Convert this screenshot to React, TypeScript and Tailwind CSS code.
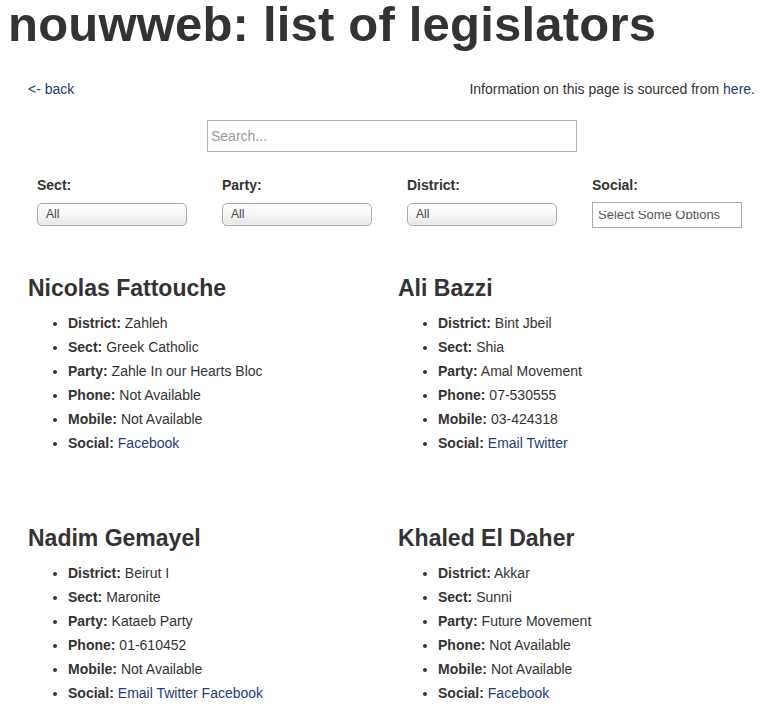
const legislators = [
  {
    name: "Nicolas Fattouche",
    district: "Zahleh",
    sect: "Greek Catholic",
    party: "Zahle In our Hearts Bloc",
    phone: "Not Available",
    mobile: "Not Available",
    social: ["Facebook"],
  },
  {
    name: "Ali Bazzi",
    district: "Bint Jbeil",
    sect: "Shia",
    party: "Amal Movement",
    phone: "07-530555",
    mobile: "03-424318",
    social: ["Email", "Twitter"],
  },
  {
    name: "Nadim Gemayel",
    district: "Beirut I",
    sect: "Maronite",
    party: "Kataeb Party",
    phone: "01-610452",
    mobile: "Not Available",
    social: ["Email", "Twitter", "Facebook"],
  },
  {
    name: "Khaled El Daher",
    district: "Akkar",
    sect: "Sunni",
    party: "Future Movement",
    phone: "Not Available",
    mobile: "Not Available",
    social: ["Facebook"],
  },
];

const filters = ["Sect:", "Party:", "District:"];

function Field({ label, value }: { label: string; value: React.ReactNode }) {
  return (
    <li className="leading-[24px]">
      <span className="font-bold">{label}</span> {value}
    </li>
  );
}

export default function App() {
  return (
    <div className="min-h-screen bg-white text-[#333] font-['Liberation_Sans',Arial,sans-serif] text-[14px]">
      <h1 className="-mt-[3px] pl-[8px] text-[49px] leading-[54px] font-bold tracking-[0.2px] text-[#333] whitespace-nowrap">
        nouwweb: list of legislators
      </h1>

      <div className="mt-[28px] flex justify-between pl-[28px] pr-[6px] leading-[20px]">
        <a href="#" className="text-[#233a80]">
          &lt;- back
        </a>
        <p>
          Information on this page is sourced from{" "}
          <a href="#" className="text-[#233a80]">
            here
          </a>
          .
        </p>
      </div>

      <div className="mt-[21px] pl-[207px]">
        <input
          type="text"
          placeholder="Search..."
          className="block w-[370px] h-[32px] border border-[#b3b3b3] px-[3px] text-[14px] text-[#333] placeholder:text-[#999] outline-none"
        />
      </div>

      <div className="mt-[23px] pl-[37px] flex items-start">
        {filters.map((f) => (
          <div key={f} className="w-[185px] shrink-0">
            <div className="font-bold leading-[20px]">{f}</div>
            <div className="mt-[8px] w-[150px] h-[23px] rounded-[5px] border border-[#aaa] bg-gradient-to-b from-white via-[#f6f6f6] to-[#e6e6e6] shadow-[inset_0_0_2px_white] pl-[8px] text-[12px] leading-[21px] text-[#444]">
              All
            </div>
          </div>
        ))}
        <div className="w-[185px] shrink-0">
          <div className="font-bold leading-[20px]">Social:</div>
          <div className="mt-[7px] w-[150px] h-[26px] border border-[#aaa] bg-white pl-[5px] pt-[8px]">
            <div className="h-[8px] overflow-hidden">
              <div className="text-[13px] leading-[8px] text-[#555] whitespace-nowrap">
                Select Some Options
              </div>
            </div>
          </div>
        </div>
      </div>

      <div className="mt-[48px] pl-[28px] grid grid-cols-[370px_370px] gap-y-[71px]">
        {legislators.map((l) => (
          <div key={l.name}>
            <h2 className="text-[23px] leading-[24px] font-bold">{l.name}</h2>
            <ul className="mt-[11px] list-disc pl-[40px]">
              <Field label="District:" value={l.district} />
              <Field label="Sect:" value={l.sect} />
              <Field label="Party:" value={l.party} />
              <Field label="Phone:" value={l.phone} />
              <Field label="Mobile:" value={l.mobile} />
              <Field
                label="Social:"
                value={l.social.map((s, i) => (
                  <span key={s}>
                    {i > 0 && " "}
                    <a href="#" className="text-[#233a80]">
                      {s}
                    </a>
                  </span>
                ))}
              />
            </ul>
          </div>
        ))}
      </div>
    </div>
  );
}
